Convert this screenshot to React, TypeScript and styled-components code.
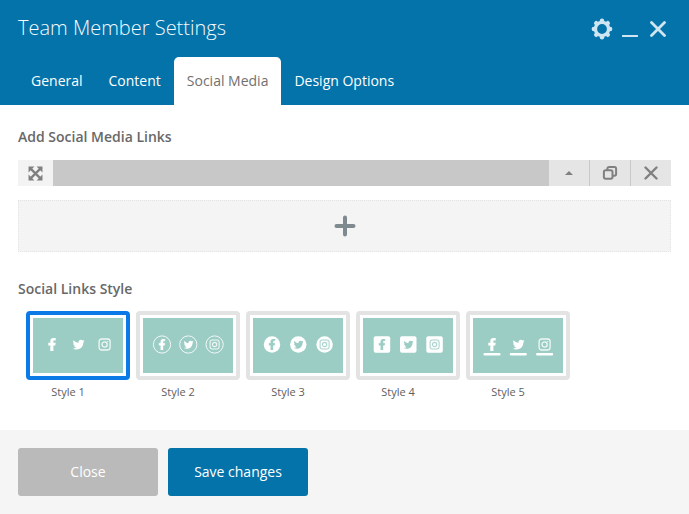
import React, { useState } from 'react';
import styled, { createGlobalStyle } from 'styled-components';
import { FaFacebookF, FaTwitter } from 'react-icons/fa';

const BLUE = '#0473aa';
const TEAL = '#9bcdc5';

const GlobalStyle = createGlobalStyle`
  *, *::before, *::after { box-sizing: border-box; }
  body {
    margin: 0;
    background: #fff;
    color: #606060;
    font: 14px/20px "Open Sans", "Noto Sans", sans-serif;
  }
  button { font: inherit; border: 0; padding: 0; cursor: pointer; }
`;

const Panel = styled.div`
  display: flex;
  flex-direction: column;
  min-height: 100vh;
`;

const Header = styled.header`
  background: ${BLUE};
  padding: 0 18px;
`;

const TitleRow = styled.div`
  display: flex;
  align-items: center;
  justify-content: space-between;
  height: 57px;
`;

const Title = styled.h1`
  margin: 0;
  padding-bottom: 2px;
  color: #f4fafd;
  font-size: 20px;
  line-height: 28px;
  font-weight: 300;
`;

const WindowControls = styled.div`
  display: flex;
  align-items: center;
  gap: 4px;
  padding-right: 1px;
`;

const WindowButton = styled.button`
  display: grid;
  place-items: center;
  width: 24px;
  height: 24px;
  background: none;
  color: #cfe5f2;
`;

const Tabs = styled.nav`
  display: flex;
`;

const Tab = styled.button<{ $active: boolean }>`
  height: 48px;
  padding: 0 13px;
  border-radius: 5px 5px 0 0;
  background: ${(p) => (p.$active ? '#fff' : 'transparent')};
  color: ${(p) => (p.$active ? '#707070' : '#fff')};
  font-weight: ${(p) => (p.$active ? 400 : 500)};
`;

const Body = styled.main`
  flex: 1;
  padding: 22px 18px;
`;

const SectionTitle = styled.h2`
  margin: 0;
  font-size: 14px;
  line-height: 20px;
  font-weight: 600;
  color: #686868;
`;

const LinkRow = styled.div`
  display: flex;
  height: 26px;
  margin-top: 13px;
  background: #c8c8c8;
`;

const DragHandle = styled.button`
  display: grid;
  place-items: center;
  width: 35px;
  background: #f3f3f3;
  color: #808080;
`;

const RowActions = styled.div`
  display: flex;
  gap: 1px;
  margin-left: auto;
`;

const RowAction = styled.button`
  display: grid;
  place-items: center;
  width: 40px;
  background: #e5e5e5;
  color: #808080;
`;

const AddButton = styled.button`
  display: grid;
  place-items: center;
  width: 100%;
  height: 52px;
  margin: 14px 0 27px;
  background: #f4f4f4;
  border: 1px dotted #e4e4e4;
  color: #7e8a90;
`;

const StyleList = styled.div`
  display: flex;
  flex-wrap: wrap;
  gap: 6px;
  margin-top: 12px;
  padding-left: 8px;
`;

const StyleOption = styled.label`
  width: 104px;
  cursor: pointer;
`;

const HiddenRadio = styled.input`
  position: absolute;
  opacity: 0;
  pointer-events: none;
`;

const Thumb = styled.span<{ $selected: boolean }>`
  display: block;
  padding: 3px;
  border: 4px solid ${(p) => (p.$selected ? '#0c7ae6' : '#e3e3e3')};
  border-radius: 4px;
`;

const Preview = styled.svg`
  display: block;
  width: 90px;
  height: 55px;
  background: ${TEAL};
`;

const Caption = styled.span`
  display: block;
  padding-right: 20px;
  margin-top: 4px;
  font-size: 11px;
  line-height: 16px;
  text-align: center;
  color: #606060;
`;

const Footer = styled.footer`
  display: flex;
  gap: 10px;
  padding: 18px;
  background: #f5f5f5;
`;

const FooterButton = styled.button<{ $primary?: boolean }>`
  width: 140px;
  height: 48px;
  border-radius: 3px;
  color: #fff;
  background: ${(p) => (p.$primary ? BLUE : '#bababa')};
`;

const GearIcon = () => (
  <svg width="22" height="22" viewBox="-11 -11 22 22">
    <circle r="6.6" fill="none" stroke="currentColor" strokeWidth="3.4" />
    {[0, 45, 90, 135, 180, 225, 270, 315].map((a) => (
      <circle key={a} cx="0" cy="-8.2" r="2.2" fill="currentColor" transform={`rotate(${a})`} />
    ))}
  </svg>
);

const MinimizeIcon = () => (
  <svg width="18" height="18" viewBox="0 0 18 18">
    <rect x="1" y="15" width="16" height="2" rx="0.5" fill="currentColor" />
  </svg>
);

const CrossIcon = ({ size, weight }: { size: number; weight: number }) => (
  <svg width={size} height={size} viewBox={`0 0 ${size} ${size}`} fill="none" stroke="currentColor" strokeWidth={weight} strokeLinecap="round">
    <path d={`M1.5 1.5 L${size - 1.5} ${size - 1.5} M${size - 1.5} 1.5 L1.5 ${size - 1.5}`} />
  </svg>
);

const MoveIcon = () => (
  <svg width="15" height="15" viewBox="0 0 14 14" fill="currentColor">
    <path d="M0.5 0.5H6L0.5 6ZM13.5 0.5V6L8 0.5ZM0.5 13.5V8L6 13.5ZM13.5 13.5H8L13.5 8Z" />
    <path d="M2 2L12 12M12 2L2 12" stroke="currentColor" strokeWidth="2.2" />
  </svg>
);

const CaretIcon = () => (
  <svg width="8" height="4" viewBox="0 0 8 4" fill="currentColor">
    <path d="M4 0L8 4H0Z" />
  </svg>
);

const CopyIcon = () => (
  <svg width="16" height="16" viewBox="0 0 16 16" fill="none" stroke="currentColor" strokeWidth="2">
    <rect x="1.9" y="5.2" width="8.6" height="8.6" rx="1.8" />
    <path d="M5.4 5V3.6A1.7 1.7 0 0 1 7.1 1.9H12.4A1.7 1.7 0 0 1 14.1 3.6V9A1.7 1.7 0 0 1 12.4 10.7H10.5" />
  </svg>
);

const PlusIcon = () => (
  <svg width="22" height="22" viewBox="0 0 22 22" stroke="currentColor" strokeWidth="4" strokeLinecap="round">
    <path d="M11 2.5V19.5M2.5 11H19.5" />
  </svg>
);

type Variant = 'plain' | 'outline' | 'circle' | 'square' | 'underline';

const SocialPreview = ({ variant }: { variant: Variant }) => {
  const large = variant === 'plain' || variant === 'underline';
  const filled = variant === 'circle' || variant === 'square';
  const ink = filled ? TEAL : '#fff';
  const glyph = large ? 13 : 11;
  const bird = large ? 12 : 10;
  const camera = large ? 11 : 9;
  return (
    <Preview viewBox="0 0 90 55" aria-hidden="true">
      {[19, 45.3, 71.6].map((x) => (
        <g key={x}>
          {variant === 'outline' && <circle cx={x} cy="26.5" r="8.6" fill="none" stroke="#fff" strokeOpacity="0.85" />}
          {variant === 'circle' && <circle cx={x} cy="26.5" r="8.2" fill="#fff" />}
          {variant === 'square' && <rect x={x - 8.3} y="18.3" width="16.5" height="16.5" rx="2" fill="#fff" />}
          {variant === 'underline' && <rect x={x - 8.5} y="35" width="17" height="2.6" rx="1" fill="#fff" />}
        </g>
      ))}
      <FaFacebookF x={19 - glyph / 2} y={26.5 - glyph / 2} size={glyph} color={ink} stroke={ink} strokeWidth="20" />
      <FaTwitter x={45.6 - bird / 2} y={26.7 - bird / 2} size={bird} color={ink} />
      <g
        transform={`translate(${71.6 - camera / 2} ${26.5 - camera / 2}) scale(${camera / 11})`}
        fill="none"
        stroke={ink}
        strokeWidth="1.3"
        strokeOpacity="0.85"
      >
        <rect x="0" y="0" width="11" height="11" rx="2.4" />
        <circle cx="5.5" cy="5.5" r="2.6" />
        <circle cx="8.6" cy="2.4" r="0.5" fill={ink} stroke="none" />
      </g>
    </Preview>
  );
};

const tabs = ['General', 'Content', 'Social Media', 'Design Options'];
const variants: Variant[] = ['plain', 'outline', 'circle', 'square', 'underline'];

export default function App() {
  const [tab, setTab] = useState('Social Media');
  const [selected, setSelected] = useState<Variant>('plain');

  return (
    <>
      <GlobalStyle />
      <Panel>
        <Header>
          <TitleRow>
            <Title>Team Member Settings</Title>
            <WindowControls>
              <WindowButton aria-label="Settings"><GearIcon /></WindowButton>
              <WindowButton aria-label="Minimize"><MinimizeIcon /></WindowButton>
              <WindowButton aria-label="Close window"><CrossIcon size={16} weight={2.8} /></WindowButton>
            </WindowControls>
          </TitleRow>
          <Tabs role="tablist">
            {tabs.map((name) => (
              <Tab key={name} role="tab" aria-selected={tab === name} $active={tab === name} onClick={() => setTab(name)}>
                {name}
              </Tab>
            ))}
          </Tabs>
        </Header>
        <Body>
          <SectionTitle>Add Social Media Links</SectionTitle>
          <LinkRow>
            <DragHandle aria-label="Move"><MoveIcon /></DragHandle>
            <RowActions>
              <RowAction aria-label="Toggle"><CaretIcon /></RowAction>
              <RowAction aria-label="Duplicate"><CopyIcon /></RowAction>
              <RowAction aria-label="Remove"><CrossIcon size={14} weight={2.4} /></RowAction>
            </RowActions>
          </LinkRow>
          <AddButton aria-label="Add link"><PlusIcon /></AddButton>
          <SectionTitle id="style-title">Social Links Style</SectionTitle>
          <StyleList role="radiogroup" aria-labelledby="style-title">
            {variants.map((v, i) => (
              <StyleOption key={v}>
                <HiddenRadio type="radio" name="links-style" value={v} checked={selected === v} onChange={() => setSelected(v)} />
                <Thumb $selected={selected === v}><SocialPreview variant={v} /></Thumb>
                <Caption>{`Style ${i + 1}`}</Caption>
              </StyleOption>
            ))}
          </StyleList>
        </Body>
        <Footer>
          <FooterButton>Close</FooterButton>
          <FooterButton $primary>Save changes</FooterButton>
        </Footer>
      </Panel>
    </>
  );
}
